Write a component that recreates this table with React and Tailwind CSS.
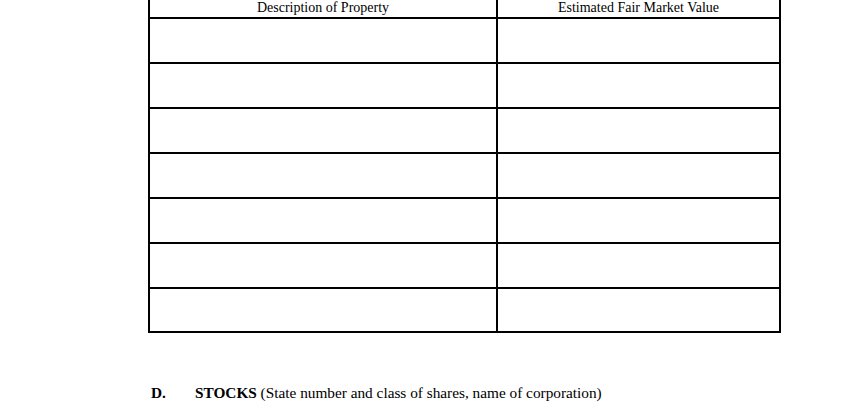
import React from 'react';

const rows = [0, 1, 2, 3, 4, 5, 6];

export default function App() {
  return (
    <div className="w-[850px] h-[416px] overflow-hidden bg-white text-black font-['Liberation_Serif','Times_New_Roman',serif]">
      <div className="ml-[148px] -mt-[10px] w-[633px] border-2 border-black">
        <div className="flex h-[25px] text-[14px] leading-[16px]">
          <div className="w-[348px] border-r-2 border-black flex items-end justify-center pb-[1px]">
            Description of Property
          </div>
          <div className="flex-1 flex items-end justify-center pb-[1px]">
            Estimated Fair Market Value
          </div>
        </div>
        {rows.map((r) => (
          <div key={r} className={`flex border-t-2 border-black ${r === 6 ? 'h-[44px]' : 'h-[45px]'}`}>
            <div className="w-[348px] border-r-2 border-black" />
            <div className="flex-1" />
          </div>
        ))}
      </div>
      <div className="mt-[51px] ml-[151px] flex text-[15.3px] leading-[17px]">
        <span className="w-[44px] font-bold">D.</span>
        <span>
          <span className="font-bold">STOCKS</span> (State number and class of shares, name of corporation)
        </span>
      </div>
    </div>
  );
}
